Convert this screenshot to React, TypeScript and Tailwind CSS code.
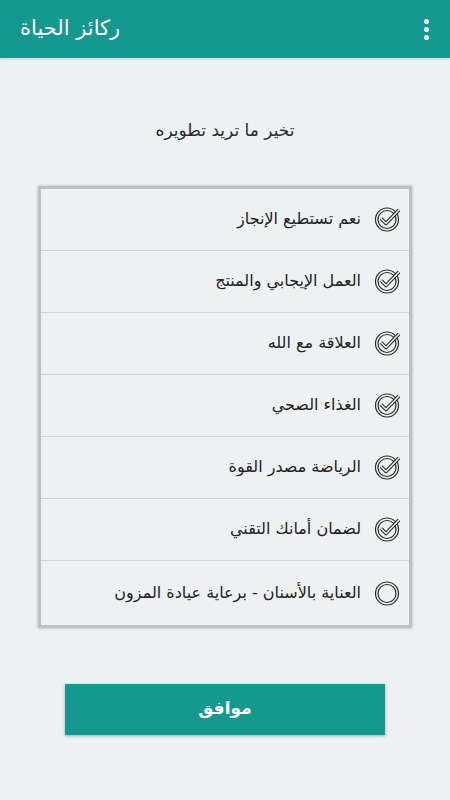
import React from "react";

const items = [
  { label: "نعم تستطيع الإنجاز", checked: true },
  { label: "العمل الإيجابي والمنتج", checked: true },
  { label: "العلاقة مع الله", checked: true },
  { label: "الغذاء الصحي", checked: true },
  { label: "الرياضة مصدر القوة", checked: true },
  { label: "لضمان أمانك التقني", checked: true },
  { label: "العناية بالأسنان - برعاية عيادة المزون", checked: false },
];

const CheckIcon = ({ checked }: { checked: boolean }) => (
  <svg width="28" height="28" viewBox="0 0 28 28" fill="none">
    <circle cx="13" cy="14.5" r="11.5" stroke="#2b2b2b" strokeWidth="1.2" />
    <circle cx="13" cy="14.5" r="9" stroke="#2b2b2b" strokeWidth="1.2" />
    {checked && (
      <>
        <path d="M7 13.5 L12 18.5 L25 5" stroke="#2b2b2b" strokeWidth="3.6" strokeLinejoin="round" />
        <path d="M7 13.5 L12 18.5 L25 5" stroke="#eef1f2" strokeWidth="1.5" strokeLinejoin="round" />
      </>
    )}
  </svg>
);

export default function App() {
  return (
    <div className="w-[450px] h-[800px] bg-[#eef1f2] flex flex-col" style={{ fontFamily: '"DejaVu Sans", "Noto Sans", sans-serif' }}>
      {/* App bar */}
      <header className="h-[58px] bg-[#139990] flex items-center justify-between pl-5 pr-4 shadow-[0_1px_3px_rgba(0,0,0,0.15)] shrink-0">
        <span className="text-white text-[21px]" dir="rtl">ركائز الحياة</span>
        <div className="flex flex-col gap-[3px] items-center w-4">
          <span className="w-[5px] h-[5px] rounded-full bg-white" />
          <span className="w-[5px] h-[5px] rounded-full bg-white" />
          <span className="w-[5px] h-[5px] rounded-full bg-white" />
        </div>
      </header>

      <p className="text-center text-[17px] text-[#2a2a35] mt-[60px]" dir="rtl">تخير ما تريد تطويره</p>

      {/* Options card */}
      <div className="mx-[38px] mt-[42px] border-[3px] border-[#bcc0c1] shadow-[0_0_3px_rgba(0,0,0,0.25)] bg-[#eef1f2]" dir="rtl">
        {items.map((it, i) => (
          <div
            key={i}
            className={`flex items-center gap-[13px] pr-[7px] ${i < items.length - 1 ? "h-[62px] border-b border-[#cfd2d3]" : "h-[64px]"}`}
          >
            <CheckIcon checked={it.checked} />
            <span className="text-[16px] text-[#222]">{it.label}</span>
          </div>
        ))}
      </div>

      <div className="mt-[56px] px-[65px]">
        <button className="w-full h-[51px] bg-[#139990] text-white text-[17px] font-bold shadow-[0_1px_3px_rgba(0,0,0,0.3)]" dir="rtl">
          موافق
        </button>
      </div>
    </div>
  );
}
